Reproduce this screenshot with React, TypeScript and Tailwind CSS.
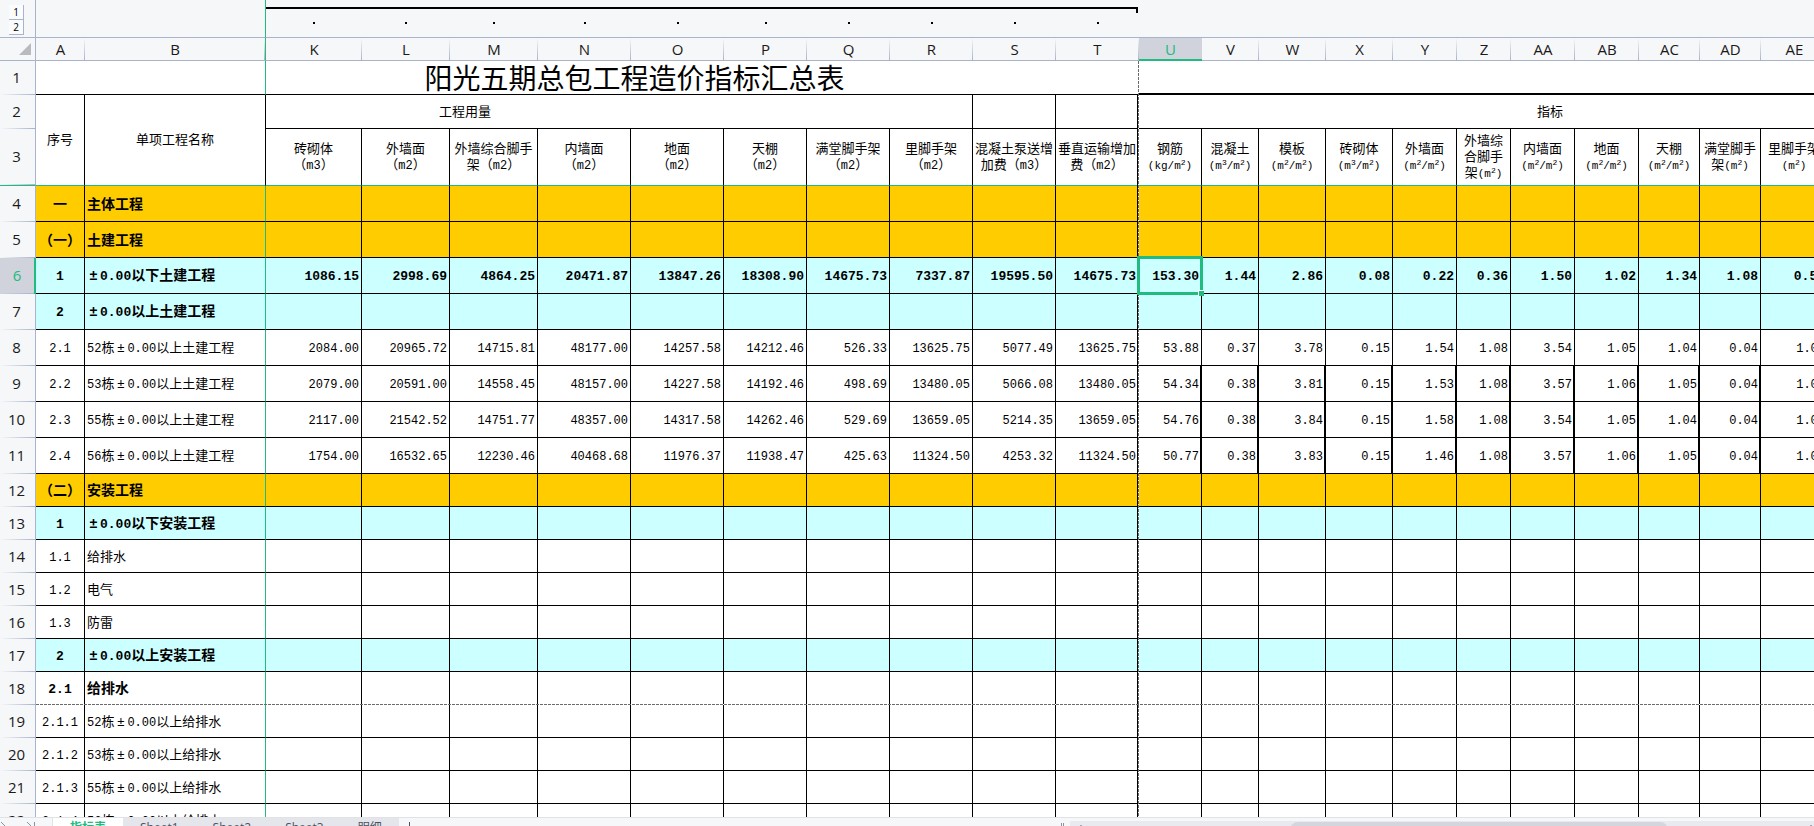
import { Fragment } from 'react';
import type { ReactNode } from 'react';
import clsx from 'clsx';

type Tone = 'orange' | 'cyan' | 'plain';

interface SheetRow {
  no: number;
  index: string;
  name: string;
  tone: Tone;
  bold?: boolean;
  tall?: boolean;
  thick?: boolean;
  values?: string[];
}

interface Column {
  id: string;
  width: string;
  lines: string[];
}

// columns C..J are folded into the outline group
const usageColumns: Column[] = [
  { id: 'K', width: 'w-[96px]', lines: ['砖砌体', '（m3）'] },
  { id: 'L', width: 'w-[88px]', lines: ['外墙面', '（m2）'] },
  { id: 'M', width: 'w-[88px]', lines: ['外墙综合脚手', '架（m2）'] },
  { id: 'N', width: 'w-[93px]', lines: ['内墙面', '（m2）'] },
  { id: 'O', width: 'w-[93px]', lines: ['地面', '（m2）'] },
  { id: 'P', width: 'w-[83px]', lines: ['天棚', '（m2）'] },
  { id: 'Q', width: 'w-[83px]', lines: ['满堂脚手架', '（m2）'] },
  { id: 'R', width: 'w-[83px]', lines: ['里脚手架', '（m2）'] },
  { id: 'S', width: 'w-[83px]', lines: ['混凝土泵送增', '加费（m3）'] },
  { id: 'T', width: 'w-[83px]', lines: ['垂直运输增加', '费（m2）'] },
];

const indexColumns: Column[] = [
  { id: 'U', width: 'w-[63px]', lines: ['钢筋', '(kg/m²)'] },
  { id: 'V', width: 'w-[57px]', lines: ['混凝土', '(m³/m²)'] },
  { id: 'W', width: 'w-[67px]', lines: ['模板', '(m²/m²)'] },
  { id: 'X', width: 'w-[67px]', lines: ['砖砌体', '(m³/m²)'] },
  { id: 'Y', width: 'w-[64px]', lines: ['外墙面', '(m²/m²)'] },
  { id: 'Z', width: 'w-[54px]', lines: ['外墙综', '合脚手', '架(m²)'] },
  { id: 'AA', width: 'w-[64px]', lines: ['内墙面', '(m²/m²)'] },
  { id: 'AB', width: 'w-[64px]', lines: ['地面', '(m²/m²)'] },
  { id: 'AC', width: 'w-[61px]', lines: ['天棚', '(m²/m²)'] },
  { id: 'AD', width: 'w-[61px]', lines: ['满堂脚手', '架(m²)'] },
  { id: 'AE', width: 'w-[67px]', lines: ['里脚手架', '(m²)'] },
  { id: 'AF', width: 'w-[134px]', lines: [] },
];

const dataColumns = [...usageColumns, ...indexColumns];

const rows: SheetRow[] = [
  { no: 4, index: '一', name: '主体工程', tone: 'orange', bold: true, tall: true },
  { no: 5, index: '（一）', name: '土建工程', tone: 'orange', bold: true, tall: true },
  {
    no: 6, index: '1', name: '±0.00以下土建工程', tone: 'cyan', bold: true, tall: true,
    values: ['1086.15', '2998.69', '4864.25', '20471.87', '13847.26', '18308.90', '14675.73', '7337.87', '19595.50', '14675.73', '153.30', '1.44', '2.86', '0.08', '0.22', '0.36', '1.50', '1.02', '1.34', '1.08', '0.54'],
  },
  { no: 7, index: '2', name: '±0.00以上土建工程', tone: 'cyan', bold: true, tall: true },
  {
    no: 8, index: '2.1', name: '52栋±0.00以上土建工程', tone: 'plain', tall: true,
    values: ['2084.00', '20965.72', '14715.81', '48177.00', '14257.58', '14212.46', '526.33', '13625.75', '5077.49', '13625.75', '53.88', '0.37', '3.78', '0.15', '1.54', '1.08', '3.54', '1.05', '1.04', '0.04', '1.00'],
  },
  {
    no: 9, index: '2.2', name: '53栋±0.00以上土建工程', tone: 'plain', tall: true, thick: true,
    values: ['2079.00', '20591.00', '14558.45', '48157.00', '14227.58', '14192.46', '498.69', '13480.05', '5066.08', '13480.05', '54.34', '0.38', '3.81', '0.15', '1.53', '1.08', '3.57', '1.06', '1.05', '0.04', '1.00'],
  },
  {
    no: 10, index: '2.3', name: '55栋±0.00以上土建工程', tone: 'plain', tall: true, thick: true,
    values: ['2117.00', '21542.52', '14751.77', '48357.00', '14317.58', '14262.46', '529.69', '13659.05', '5214.35', '13659.05', '54.76', '0.38', '3.84', '0.15', '1.58', '1.08', '3.54', '1.05', '1.04', '0.04', '1.00'],
  },
  {
    no: 11, index: '2.4', name: '56栋±0.00以上土建工程', tone: 'plain', tall: true, thick: true,
    values: ['1754.00', '16532.65', '12230.46', '40468.68', '11976.37', '11938.47', '425.63', '11324.50', '4253.32', '11324.50', '50.77', '0.38', '3.83', '0.15', '1.46', '1.08', '3.57', '1.06', '1.05', '0.04', '1.00'],
  },
  { no: 12, index: '（二）', name: '安装工程', tone: 'orange', bold: true },
  { no: 13, index: '1', name: '±0.00以下安装工程', tone: 'cyan', bold: true },
  { no: 14, index: '1.1', name: '给排水', tone: 'plain' },
  { no: 15, index: '1.2', name: '电气', tone: 'plain' },
  { no: 16, index: '1.3', name: '防雷', tone: 'plain' },
  { no: 17, index: '2', name: '±0.00以上安装工程', tone: 'cyan', bold: true },
  { no: 18, index: '2.1', name: '给排水', tone: 'plain', bold: true },
  { no: 19, index: '2.1.1', name: '52栋±0.00以上给排水', tone: 'plain' },
  { no: 20, index: '2.1.2', name: '53栋±0.00以上给排水', tone: 'plain' },
  { no: 21, index: '2.1.3', name: '55栋±0.00以上给排水', tone: 'plain' },
  { no: 22, index: '2.1.4', name: '56栋±0.00以上给排水', tone: 'plain' },
];

const sheets = ['指标表', 'Sheet1', 'Sheet2', 'Sheet3', '明细'];

const toneClass: Record<Tone, string> = {
  orange: 'bg-[#ffcc00]',
  cyan: 'bg-[#ccffff]',
  plain: 'bg-white',
};

const ACTIVE_COL = 'U';
const ACTIVE_ROW = 6;

// half-width characters run one size smaller than the Chinese text, ± takes a full cell
function CellText({ text, bold }: { text: string; bold?: boolean }) {
  const parts = text.split(/(±|[\x21-\x7e]+)/).filter(Boolean);
  return (
    <span className={bold ? 'text-[14px] font-bold' : 'text-[13px]'}>
      {parts.map((part, i) => {
        if (part === '±') {
          return <span key={i} className="inline-block w-[13px] text-center">±</span>;
        }
        if (/^[\x21-\x7e]+$/.test(part)) {
          return <span key={i} className={bold ? 'text-[13px]' : 'text-[12px]'}>{part}</span>;
        }
        return <Fragment key={i}>{part}</Fragment>;
      })}
    </span>
  );
}

function UnitText({ text }: { text: string }) {
  const parts = text.split(/([²³])/).filter(Boolean);
  return (
    <>
      {parts.map((part, i) => {
        if (part === '²' || part === '³') {
          return <sup key={i} className="text-[8px] leading-none">{part === '²' ? '2' : '3'}</sup>;
        }
        if (/^[\x21-\x7e]+$/.test(part)) {
          return <span key={i} className="text-[11px]">{part}</span>;
        }
        const open = part.indexOf('(');
        if (open > 0) {
          return (
            <Fragment key={i}>
              {part.slice(0, open)}
              <span className="text-[11px]">{part.slice(open)}</span>
            </Fragment>
          );
        }
        return <CellText key={i} text={part} />;
      })}
    </>
  );
}

function RowHead({ no, className }: { no: number; className?: string }) {
  const active = no === ACTIVE_ROW;
  return (
    <th
      scope="row"
      className={clsx(
        'p-0 pb-[2px] text-center align-middle font-["Open_Sans",sans-serif] text-[15px] leading-5 font-normal',
        'bg-[linear-gradient(to_right,transparent,#a9b3cc)] bg-[length:100%_1px] bg-bottom bg-no-repeat',
        active
          ? 'border-r-2 border-[#21ba7f] bg-[#d0d3db] text-[#21ba7f]'
          : 'border-r border-[#a9b3cc] bg-[#f6f7f9] pr-[2px] text-[#1a1a1a]',
        className,
      )}
    >
      {no}
    </th>
  );
}

function ColHead({ id, className }: { id: string; className?: string }) {
  const active = id === ACTIVE_COL;
  return (
    <th
      scope="col"
      className={clsx(
        'p-0 text-center align-middle font-["Open_Sans",sans-serif] text-[15px] leading-5 font-normal',
        active
          ? 'border-b-2 border-[#21ba7f] bg-[#d0d3db] text-[#21ba7f]'
          : 'border-b border-b-[#a9b3cc] bg-[#f6f7f9] bg-[linear-gradient(to_bottom,transparent,#a9b3cc)] bg-[length:1px_100%] bg-right bg-no-repeat text-[#1a1a1a]',
        className,
      )}
    >
      {id}
    </th>
  );
}

function OutlineRow() {
  return (
    <tr className="h-[38px] bg-[#f6f7f9]">
      <td className="border-r border-b border-[#a9b3cc] p-0 align-top">
        <div className="ml-[9px] flex w-[15px] flex-col pt-[5px]">
          {[1, 2].map((level) => (
            <button
              key={level}
              type="button"
              className="h-[15px] border-r border-b border-[#a9b3cc] bg-[#fbfcfd] text-center font-['Open_Sans',sans-serif] text-[10px] leading-[14px] text-black"
            >
              {level}
            </button>
          ))}
        </div>
      </td>
      <td className="border-b border-[#a9b3cc] p-0" />
      <td className="border-r border-b border-r-[#21ba7f] border-b-[#a9b3cc] p-0" />
      {usageColumns.map((col) => (
        <td key={col.id} className="border-b border-[#a9b3cc] p-0 align-top">
          <div className={clsx('mt-[7px] flex h-[6px] flex-col', col.id === 'T' && 'mr-px items-end')}>
            <div className="h-[2px] w-full bg-black" />
            {col.id === 'T' && <div className="h-1 w-[2px] bg-black" />}
          </div>
          <div className="mx-auto mt-[9px] h-[2px] w-[2px] bg-black" />
        </td>
      ))}
      <td colSpan={indexColumns.length} className="border-b border-[#a9b3cc] p-0" />
    </tr>
  );
}

function TitleRows() {
  return (
    <>
      <tr className="h-[34px]">
        <RowHead no={1} />
        <td colSpan={2} className="border-r border-b border-r-[#21ba7f] border-b-black p-0" />
        <td colSpan={10} className="border-b border-black p-0 pt-2 pr-[136px] text-center text-[28px] leading-6">
          阳光五期总包工程造价指标汇总表
        </td>
        <td colSpan={indexColumns.length} className="border-b-2 border-black p-0" />
      </tr>
      <tr className="h-[34px]">
        <RowHead no={2} />
        <HeadCell rowSpan={2} className="border-b-[#21ba7f]">序号</HeadCell>
        <HeadCell rowSpan={2} className="border-r-[#21ba7f] border-b-[#21ba7f]">单项工程名称</HeadCell>
        <HeadCell colSpan={8} className="border-b-black pr-[308px]">工程用量</HeadCell>
        <HeadCell className="border-b-black" />
        <HeadCell className="border-b-black" />
        <HeadCell colSpan={indexColumns.length} className="border-b-black">指标</HeadCell>
      </tr>
      <tr className="h-[57px]">
        <RowHead no={3} className="border-b border-b-[#21ba7f]" />
        {dataColumns.map((col) => (
          <HeadCell key={col.id} className="border-b-[#21ba7f]">
            {col.lines.map((line) => (
              <div key={line} className="h-4 whitespace-nowrap">
                <UnitText text={line} />
              </div>
            ))}
          </HeadCell>
        ))}
      </tr>
    </>
  );
}

function HeadCell({ children, className, rowSpan, colSpan }: {
  children?: ReactNode;
  className?: string;
  rowSpan?: number;
  colSpan?: number;
}) {
  return (
    <td
      rowSpan={rowSpan}
      colSpan={colSpan}
      className={clsx('border-r border-b border-r-black p-0 pt-[2px] text-center align-middle text-[13px] leading-4', className)}
    >
      {children}
    </td>
  );
}

function DataRow({ row }: { row: SheetRow }) {
  const bottom = row.no === 18 ? 'border-b-white' : 'border-b-black';
  return (
    <tr className={clsx(row.tall ? 'h-[36px]' : 'h-[33px]', toneClass[row.tone])}>
      <RowHead no={row.no} />
      <td className={clsx('border-r border-b border-r-black p-0 pt-[2px] text-center whitespace-nowrap', bottom)}>
        <CellText text={row.index} bold={row.bold} />
      </td>
      <td className={clsx('border-r border-b border-r-[#21ba7f] p-0 pt-[2px] pl-[2px] text-left whitespace-nowrap', bottom)}>
        <CellText text={row.name} bold={row.bold} />
      </td>
      {dataColumns.map((col, i) => {
        const active = row.no === ACTIVE_ROW && col.id === ACTIVE_COL;
        const thick = row.thick && i >= usageColumns.length;
        return (
          <td
            key={col.id}
            className={clsx(
              'border-b border-r-black p-0 pt-[2px] text-right whitespace-nowrap',
              thick ? 'border-r-2 pr-px' : 'border-r pr-[2px]',
              bottom,
              active && 'relative',
            )}
          >
            {row.values?.[i] && <CellText text={row.values[i]} bold={row.bold} />}
            {active && (
              <span className="absolute -inset-[2px] z-20 border-[3px] border-[#21ba7f]">
                <span className="absolute -right-[4px] -bottom-[4px] h-[6px] w-[6px] border-t border-l border-white bg-[#21ba7f]" />
              </span>
            )}
          </td>
        );
      })}
    </tr>
  );
}

function SheetTabs() {
  return (
    <footer className="flex h-[9px] shrink-0 items-start overflow-hidden border-t border-[#e0e2e6] bg-[#f6f7f9]">
      <div className="flex w-[53px] shrink-0 gap-[14px] border-r border-[#e0e2e6] pt-1 text-[#8b93a3]">
        <svg width="12" height="14" viewBox="0 0 12 14" fill="none" stroke="currentColor" aria-hidden="true">
          <path d="M1 0 L7 6 L1 12" />
        </svg>
        <svg width="12" height="14" viewBox="0 0 12 14" fill="none" stroke="currentColor" aria-hidden="true">
          <path d="M1 0 L7 6 L1 12 M8.5 0 V12" />
        </svg>
      </div>
      {sheets.map((name, i) => (
        <button
          key={name}
          type="button"
          className={clsx(
            'flex h-7 shrink-0 items-start px-[17px] pt-[2px] text-[12px] leading-4 whitespace-nowrap',
            'font-["Open_Sans","Noto_Sans_CJK_SC",sans-serif]',
            i === 0 ? 'bg-white font-bold text-[#21ba7f]' : 'bg-[#e5e6eb] text-[#4b5262]',
          )}
        >
          {name}
        </button>
      ))}
      <svg className="mt-1 ml-1 shrink-0 text-[#4b5262]" width="13" height="13" viewBox="0 0 13 13" fill="none" stroke="currentColor" aria-hidden="true">
        <path d="M6.5 0 V13 M0 6.5 H13" />
      </svg>
      <div className="min-w-0 flex-1" />
      <div className="mt-[5px] h-4 w-[3px] shrink-0 border-x border-[#8b93a3]" />
      <div className="mt-[3px] ml-[6px] flex h-5 w-[41%] shrink-0 bg-[#e9eaef] pr-[2px] pl-[10px]">
        <span className="mt-1 h-[2px] w-[2px] bg-[#a0a6b3]" />
        <div className="mt-px mr-auto ml-[208px] h-4 w-[378px] rounded-lg bg-[#d3d6dd]" />
        <span className="mt-1 h-[2px] w-[2px] bg-[#a0a6b3]" />
      </div>
    </footer>
  );
}

export default function App() {
  return (
    <div className="flex h-screen flex-col overflow-hidden bg-white font-['Liberation_Mono','Noto_Sans_CJK_SC',monospace] text-black">
      <main className="relative min-h-0 flex-1 overflow-hidden">
        <table className="w-px table-fixed border-separate border-spacing-0 leading-5">
          <colgroup>
            <col className="w-[36px]" />
            <col className="w-[49px]" />
            <col className="w-[181px]" />
            {dataColumns.map((col) => (
              <col key={col.id} className={col.width} />
            ))}
          </colgroup>
          <thead>
            <OutlineRow />
            <tr className="h-[23px]">
              <th className="border-r border-b border-[#a9b3cc] bg-[#f6f7f9] p-0 pr-1">
                <svg className="ml-auto" width="12" height="12" viewBox="0 0 12 12" aria-hidden="true">
                  <path d="M12 0 V12 H0 Z" fill="#b8babd" />
                </svg>
              </th>
              <ColHead id="A" />
              <ColHead id="B" className="border-r border-r-[#21ba7f]" />
              {dataColumns.map((col) => (
                <ColHead key={col.id} id={col.id} />
              ))}
            </tr>
          </thead>
          <tbody>
            <TitleRows />
            {rows.map((row) => (
              <DataRow key={row.no} row={row} />
            ))}
          </tbody>
        </table>

        {/* page break guides */}
        <div className="absolute top-[61px] bottom-0 left-[1138px] z-10 w-px bg-[repeating-linear-gradient(to_bottom,#6b6b6b_0px,#6b6b6b_3px,#fff_3px,#fff_4px)]" />
        <div className="absolute top-[95px] bottom-0 left-[1137px] z-10 w-px bg-black" />
        <div className="absolute top-[704px] right-0 left-[36px] z-10 h-px bg-[repeating-linear-gradient(to_right,#6b6b6b_0px,#6b6b6b_3px,#fff_3px,#fff_4px)]" />
      </main>
      <SheetTabs />
    </div>
  );
}
